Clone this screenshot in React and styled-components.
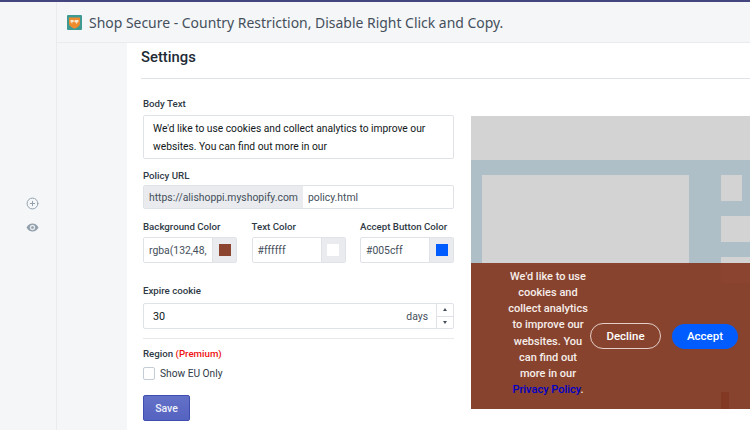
import styled, { createGlobalStyle } from "styled-components";
import { CirclePlus } from "lucide-react";

const GlobalStyle = createGlobalStyle`
  html, body {
    margin: 0;
    padding: 0;
    background: #f4f6f8;
    font-family: Roboto, "Liberation Sans", sans-serif;
    color: #212b36;
  }
  * { box-sizing: border-box; }
`;

const Page = styled.div`
  display: flex;
  width: 750px;
  height: 430px;
  overflow: hidden;
  border-top: 2px solid #43467f;
`;

const Rail = styled.aside`
  flex: 0 0 57px;
  display: flex;
  flex-direction: column;
  align-items: center;
  gap: 11px;
  padding: 195px 0 0 9px;
  border-right: 1px solid #e9ebee;
  color: #919eab;
`;

const Main = styled.div`
  flex: 1;
  min-width: 0;
  display: flex;
  flex-direction: column;
`;

const AppBar = styled.header`
  flex: 0 0 41px;
  display: flex;
  align-items: center;
  gap: 7px;
  padding: 0 0 0 10px;
  border-bottom: 1px solid #e9ebee;
`;

const AppTitle = styled.h1`
  margin: 0;
  font-family: "Noto Sans", sans-serif;
  font-size: 13.95px;
  font-weight: 400;
  color: #454f5b;
  white-space: nowrap;
`;

const Body = styled.div`
  flex: 1;
  display: flex;
  padding-left: 70px;
  min-height: 0;
`;

const Card = styled.main`
  flex: 1;
  min-width: 0;
  background: #fff;
  padding: 0 0 0 14px;
`;

const CardTitle = styled.h2`
  margin: 0;
  height: 36px;
  padding-top: 4px;
  border-bottom: 1px solid #dfe3e8;
  font-size: 14.8px;
  font-weight: 500;
  line-height: 20px;
  color: #212b36;
`;

const Columns = styled.div`
  display: flex;
  gap: 17px;
`;

const Form = styled.form`
  flex: 0 0 313px;
  min-width: 0;
  padding: 0 0 0 2px;
  display: flex;
  flex-direction: column;
`;

const Label = styled.label`
  display: block;
  font-size: 9.7px;
  font-weight: 500;
  line-height: 14px;
  white-space: nowrap;
  color: #2f3a46;
  margin-bottom: ${(p) => p.$gap ?? 3}px;
`;

const Premium = styled.span`
  color: #ee1111;
`;

const Field = styled.div`
  margin-top: ${(p) => p.$top ?? 0}px;
`;

const TextBox = styled.div`
  height: 44px;
  padding: 4px 9px;
  background: #fff;
  border: 1px solid #dfe3e8;
  border-radius: 2px;
  font-size: 10.25px;
  line-height: 17.5px;
  color: #111820;
`;

const InputGroup = styled.div`
  display: flex;
  height: ${(p) => p.$height ?? 26}px;
  border: 1px solid #dfe3e8;
  border-radius: 2px;
  background: #fff;
  overflow: hidden;
  font-size: 10.4px;
  color: #454f5b;
`;

const Addon = styled.span`
  display: flex;
  align-items: center;
  padding: 0 5px;
  background: #e9ebee;
  white-space: nowrap;
`;

const InputText = styled.span`
  flex: 1;
  min-width: 0;
  display: flex;
  align-items: center;
  padding: 0 5px;
  white-space: nowrap;
  overflow: hidden;
`;

const ColorRow = styled.div`
  display: grid;
  grid-template-columns: repeat(3, 1fr);
  column-gap: 14.5px;
  margin-top: 11px;
`;

const SwatchBox = styled.span`
  flex: 0 0 24px;
  display: flex;
  align-items: center;
  justify-content: center;
  background: #e9ebee;
  border-left: 1px solid #dfe3e8;
`;

const Swatch = styled.span`
  width: 12px;
  height: 12px;
  background: ${(p) => p.$color};
`;

const NumberValue = styled.span`
  flex: 1;
  display: flex;
  align-items: center;
  padding-left: 9px;
  font-size: 10.8px;
  color: #111820;
`;

const Unit = styled.span`
  display: flex;
  align-items: center;
  padding-right: 8px;
`;

const Stepper = styled.span`
  flex: 0 0 17px;
  display: flex;
  flex-direction: column;
  border-left: 1px solid #dfe3e8;
`;

const StepButton = styled.span`
  flex: 1;
  display: flex;
  align-items: center;
  justify-content: center;
  border-top: ${(p) => (p.$lower ? "1px solid #dfe3e8" : "none")};

  &::after {
    content: "";
    border-left: 2.5px solid transparent;
    border-right: 2.5px solid transparent;
    border-bottom: ${(p) => (p.$lower ? "none" : "3px solid #454f5b")};
    border-top: ${(p) => (p.$lower ? "3px solid #454f5b" : "none")};
  }
`;

const Divider = styled.hr`
  margin: 9px 0 0;
  border: 0;
  border-top: 1px solid #e6e8eb;
`;

const CheckRow = styled.div`
  display: flex;
  align-items: center;
  gap: 5px;
  margin-top: 6px;
  font-size: 10.2px;
  color: #2f3a46;
`;

const CheckBox = styled.span`
  width: 12px;
  height: 13px;
  background: #fff;
  border: 1px solid #c4cdd5;
  border-radius: 2px;
`;

const SaveButton = styled.button`
  width: 47px;
  height: 26px;
  margin-top: 15px;
  padding: 0;
  border: 1px solid #3f4eae;
  border-radius: 2px;
  background: linear-gradient(#6371c7, #5563c1);
  color: #eef0fa;
  font-family: inherit;
  font-size: 10.5px;
  font-weight: 500;
`;

const Preview = styled.section`
  position: relative;
  flex: 0 0 279px;
  height: 293px;
  margin-top: 37px;
  overflow: hidden;
`;

const PreviewArt = styled.svg`
  display: block;
`;

const Banner = styled.div`
  position: absolute;
  left: 0;
  right: 0;
  bottom: 0;
  height: 146px;
  display: flex;
  align-items: center;
  padding-left: 35px;
  background: rgba(134, 60, 38, 0.95);
  color: #fff;
`;

const BannerText = styled.p`
  flex: 0 0 84px;
  margin: 0 0 5px;
  font-size: 11px;
  font-weight: 500;
  line-height: 16.1px;
  text-align: center;
  color: #f6eeea;
`;

const PrivacyLink = styled.a`
  color: #0000c8;
  font-weight: 500;
`;

const DeclineButton = styled.span`
  display: flex;
  align-items: center;
  justify-content: center;
  width: 71px;
  height: 26px;
  border: 1px solid #e4cfc8;
  border-radius: 13px;
  font-size: 11.5px;
  font-weight: 500;
`;

const AcceptButton = styled.span`
  display: flex;
  align-items: center;
  justify-content: center;
  width: 66px;
  height: 25px;
  margin-left: 11px;
  border-radius: 13px;
  background: #005cff;
  font-size: 11.5px;
  font-weight: 500;
`;

function AppIcon() {
  return (
    <svg width="15" height="15" viewBox="0 0 15 15">
      <rect width="15" height="15" rx="1" fill="#3f9a94" />
      <path d="M2 2.500h11v6c0 2.500-2.800 4-5.500 5.300C4.800 12.500 2 11 2 8.500z" fill="#ef8b2c" />
      <path d="M3.500 5h3.200v2H5.500L5 9 4.300 7.200H3.500zM7.500 5h4v1.800l-1 .5-.6 2-1.100-1.700-1.300-.4z" fill="#f8e7cf" />
    </svg>
  );
}

function EyeIcon() {
  return (
    <svg width="13" height="13" viewBox="0 0 13 13">
      <path d="M.5 6.500C2 3.700 4 2.500 6.500 2.500s4.500 1.200 6 4c-1.500 2.800-3.500 4-6 4s-4.500-1.200-6-4z" fill="#919eab" />
      <circle cx="6.500" cy="6.500" r="2.700" fill="#e6e9ec" />
      <circle cx="6.500" cy="6.500" r="1.300" fill="#919eab" />
    </svg>
  );
}

function ColorField({ label, value, color }) {
  return (
    <div>
      <Label>{label}</Label>
      <InputGroup>
        <InputText>{value}</InputText>
        <SwatchBox>
          <Swatch $color={color} />
        </SwatchBox>
      </InputGroup>
    </div>
  );
}

function PreviewBackground() {
  return (
    <PreviewArt width="279" height="293" viewBox="0 0 279 293">
      <rect width="279" height="293" fill="#afbfc7" />
      <rect width="279" height="44" fill="#d3d3d3" />
      <rect x="11" y="59" width="207" height="90" fill="#d3d3d3" />
      <rect x="250" y="59" width="21" height="26" fill="#d3d3d3" />
      <rect x="250" y="100" width="29" height="26" fill="#d3d3d3" />
      <rect x="250" y="141" width="29" height="26" fill="#d3d3d3" />
      <rect x="250" y="276" width="8" height="17" fill="#3a1005" />
    </PreviewArt>
  );
}

export default function App() {
  return (
    <>
      <GlobalStyle />
      <Page>
        <Rail>
          <CirclePlus size={13} strokeWidth={1.8} />
          <EyeIcon />
        </Rail>
        <Main>
          <AppBar>
            <AppIcon />
            <AppTitle>Shop Secure - Country Restriction, Disable Right Click and Copy.</AppTitle>
          </AppBar>
          <Body>
            <Card>
              <CardTitle>Settings</CardTitle>
              <Columns>
                <Form>
                  <Field $top={18}>
                    <Label $gap={4}>Body Text</Label>
                    <TextBox>
                      We'd like to use cookies and collect analytics to improve our websites. You can find out more in our
                    </TextBox>
                  </Field>
                  <Field $top={10}>
                    <Label $gap={2}>Policy URL</Label>
                    <InputGroup $height={24}>
                      <Addon>https://alishoppi.myshopify.com</Addon>
                      <InputText>policy.html</InputText>
                    </InputGroup>
                  </Field>
                  <ColorRow>
                    <ColorField label="Background Color" value="rgba(132,48," color="#8c4530" />
                    <ColorField label="Text Color" value="#ffffff" color="#ffffff" />
                    <ColorField label="Accept Button Color" value="#005cff" color="#005cff" />
                  </ColorRow>
                  <Field $top={21}>
                    <Label $gap={5}>Expire cookie</Label>
                    <InputGroup>
                      <NumberValue>30</NumberValue>
                      <Unit>days</Unit>
                      <Stepper>
                        <StepButton />
                        <StepButton $lower />
                      </Stepper>
                    </InputGroup>
                  </Field>
                  <Divider />
                  <Field $top={8}>
                    <Label $gap={0}>
                      Region <Premium>(Premium)</Premium>
                    </Label>
                  </Field>
                  <CheckRow>
                    <CheckBox />
                    Show EU Only
                  </CheckRow>
                  <SaveButton type="button">Save</SaveButton>
                </Form>
                <Preview>
                  <PreviewBackground />
                  <Banner>
                    <BannerText>
                      We'd like to use cookies and collect analytics to improve our websites. You can find out more in our{" "}
                      <PrivacyLink>Privacy Policy</PrivacyLink>.
                    </BannerText>
                    <DeclineButton>Decline</DeclineButton>
                    <AcceptButton>Accept</AcceptButton>
                  </Banner>
                </Preview>
              </Columns>
            </Card>
          </Body>
        </Main>
      </Page>
    </>
  );
}
